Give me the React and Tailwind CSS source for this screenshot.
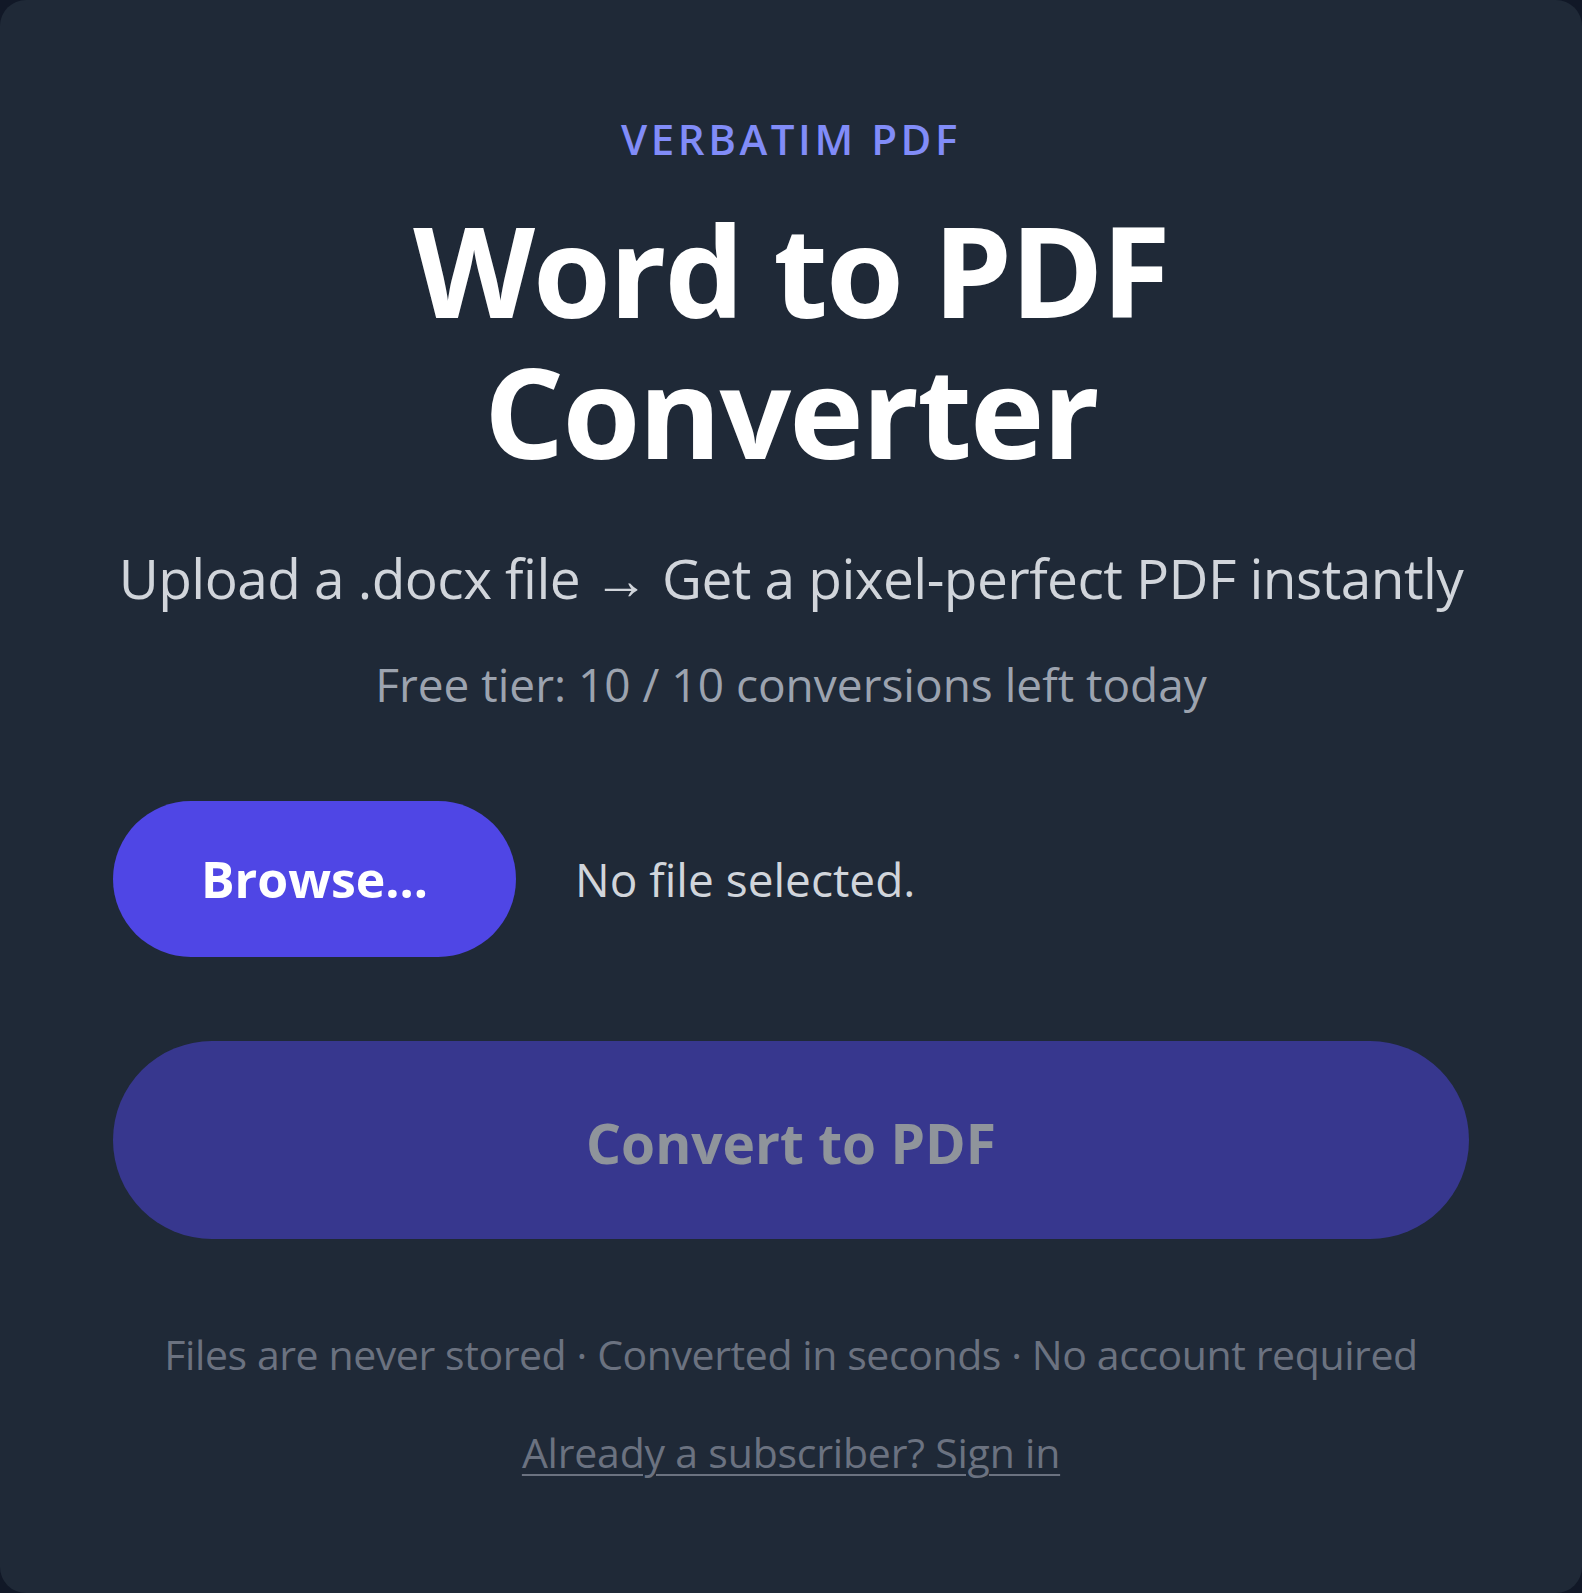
export default function App() {
  const font = { fontFamily: '"Open Sans", "Noto Sans", sans-serif' };
  return (
    <div className="min-h-screen bg-[#111827] flex" style={font}>
      <div className="w-full min-h-[1593px] rounded-[26px] bg-[#1f2937] px-[113px] pt-[114px] flex flex-col items-center text-center">
        <div className="text-[42px] leading-[50px] font-semibold tracking-[0.085em] text-[#818cf8]">
          VERBATIM PDF
        </div>
        <h1 className="mt-[35px] text-[126px] leading-[141px] font-bold text-white tracking-[-0.015em]">
          Word to PDF
          <br />
          Converter
        </h1>
        <p className="mt-[64px] text-[55px] leading-[66px] text-[#d1d5db] whitespace-nowrap tracking-[-0.01em]">
          Upload a .docx file → Get a pixel-perfect PDF instantly
        </p>
        <p className="mt-[45px] text-[46px] leading-[56px] text-[#9ca3af] whitespace-nowrap">
          Free tier: 10 / 10 conversions left today
        </p>
        <div className="mt-[89px] w-full flex items-center gap-[59px]">
          <button className="w-[403px] h-[156px] rounded-full bg-[#4f46e5] text-white text-[50px] font-bold flex items-center justify-center">
            Browse...
          </button>
          <span className="text-[46px] text-[#d1d5db]">No file selected.</span>
        </div>
        <button
          disabled
          className="mt-[84px] w-full h-[198px] rounded-full bg-[#4f46e5] opacity-50 text-white text-[55px] font-bold flex items-center justify-center pt-[6px]"
        >
          Convert to PDF
        </button>
        <p className="mt-[90px] text-[41px] leading-[50px] text-[#6b7280] whitespace-nowrap tracking-[-0.01em]">
          Files are never stored · Converted in seconds · No account required
        </p>
        <a href="#" className="mt-[48px] text-[41px] leading-[50px] text-[#6b7280] underline underline-offset-[6px] decoration-[2px] tracking-[-0.005em]">
          Already a subscriber? Sign in
        </a>
      </div>
    </div>
  );
}
